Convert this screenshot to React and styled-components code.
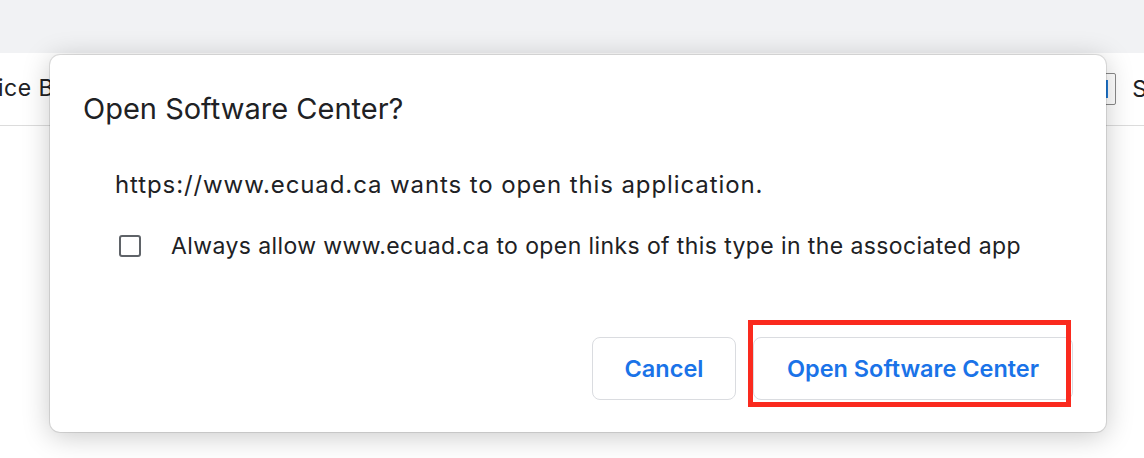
import React from "react";
import styled, { createGlobalStyle } from "styled-components";

const Global = createGlobalStyle`
  html, body { margin: 0; padding: 0; background: #ffffff; }
  body { font-family: Inter, "Noto Sans", sans-serif; color: #202124; overflow: hidden; }
`;

const Page = styled.div`
  position: relative;
  width: 1144px;
  height: 458px;
  overflow: hidden;
  background: #ffffff;
`;

const TopBar = styled.div`
  height: 53px;
  background: #f1f2f4;
`;

const HeaderRow = styled.div`
  height: 72px;
  border-bottom: 1px solid #dcdcdc;
  display: flex;
  align-items: center;
  justify-content: space-between;
  font-size: 23px;
  color: #202124;
`;

const LeftText = styled.span`
  margin-left: -2px;
  margin-top: -2px;
  letter-spacing: 0.5px;
`;

const RightGroup = styled.div`
  display: flex;
  align-items: center;
  gap: 16px;
  margin-right: -3px;
`;

const AppIcon = styled.div`
  width: 14px;
  height: 30px;
  border: 1px solid #8a8a8a;
  border-radius: 2px;
  display: flex;
  align-items: center;
  justify-content: flex-start;
  &::after {
    content: "";
    margin-left: 2px;
    width: 5px;
    height: 18px;
    background: #1f7ad6;
  }
`;

const Modal = styled.div`
  position: absolute;
  left: 50px;
  top: 55px;
  width: 1056px;
  height: 377px;
  box-sizing: border-box;
  background: #ffffff;
  border-radius: 10px;
  box-shadow: 0 0 0 1px rgba(0, 0, 0, 0.1), 0 4px 28px rgba(0, 0, 0, 0.22);
  padding: 36px 33px 0 33px;
  display: flex;
  flex-direction: column;
`;

const Title = styled.h1`
  margin: 0;
  font-size: 29px;
  font-weight: 400;
  line-height: 36px;
  color: #202124;
`;

const Body = styled.div`
  padding-left: 32px;
  display: flex;
  flex-direction: column;
`;

const Message = styled.p`
  margin: 43px 0 0 0;
  font-size: 24px;
  letter-spacing: 0.9px;
  line-height: 30px;
  color: #202124;
`;

const CheckRow = styled.label`
  margin-top: 31px;
  display: flex;
  align-items: center;
  gap: 30px;
  font-size: 23px;
  letter-spacing: 0.4px;
  line-height: 30px;
  color: #202124;
`;

const Box = styled.span`
  margin-left: 4px;
  width: 22px;
  height: 22px;
  box-sizing: border-box;
  border: 2px solid #5f6368;
  border-radius: 3px;
  flex: none;
`;

const Actions = styled.div`
  margin-top: 76px;
  display: flex;
  justify-content: flex-end;
  gap: 17px;
`;

const Button = styled.button`
  height: 63px;
  width: ${(p) => p.$w}px;
  box-sizing: border-box;
  background: #ffffff;
  border: 1px solid #dadce0;
  border-radius: 8px;
  font-family: Inter, "Noto Sans", sans-serif;
  font-size: 23.5px;
  font-weight: 600;
  color: #1a73e8;
  padding: 0;
`;

const Highlight = styled.div`
  position: absolute;
  left: 698px;
  top: 265px;
  width: 323px;
  height: 87px;
  box-sizing: border-box;
  border: 5px solid #fa2a1e;
  pointer-events: none;
`;

export default function App() {
  return (
    <>
      <Global />
      <Page>
        <TopBar />
        <HeaderRow>
          <LeftText>ice B</LeftText>
          <RightGroup>
            <AppIcon />
            <span>S</span>
          </RightGroup>
        </HeaderRow>
        <Modal>
          <Title>Open Software Center?</Title>
          <Body>
            <Message>https://www.ecuad.ca wants to open this application.</Message>
            <CheckRow>
              <Box />
              <span>Always allow www.ecuad.ca to open links of this type in the associated app</span>
            </CheckRow>
          </Body>
          <Actions>
            <Button $w={144}>Cancel</Button>
            <Button $w={320}>Open Software Center</Button>
          </Actions>
          <Highlight />
        </Modal>
      </Page>
    </>
  );
}
